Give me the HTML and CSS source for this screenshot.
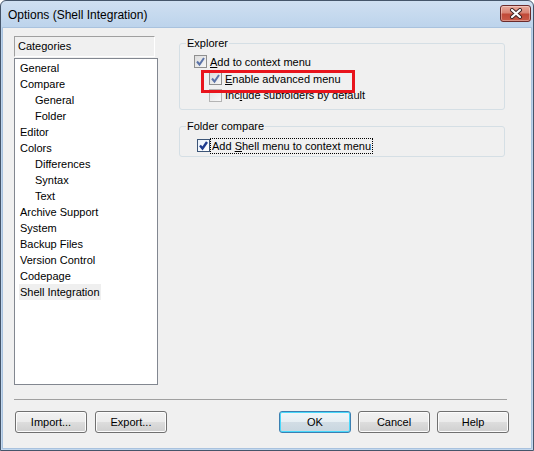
FILE: index.html
```html
<!DOCTYPE html>
<html>
<head>
<meta charset="utf-8">
<link rel="stylesheet" href="styles.css">
</head>
<body>
<div class="window">
  <div class="titlebar">
    <span class="title">Options (Shell Integration)</span>
    <div class="close">
      <svg width="14" height="11" viewBox="0 0 14 11">
        <path d="M3 2 L11 9 M11 2 L3 9" stroke="#3b2222" stroke-width="4" stroke-linecap="round" fill="none"/>
        <path d="M3 2 L11 9 M11 2 L3 9" stroke="#ffffff" stroke-width="2.2" stroke-linecap="round" fill="none"/>
      </svg>
    </div>
  </div>
  <div class="client">
    <div class="main">
      <div class="categories">
        <div class="cat-header">Categories</div>
        <div class="cat-list">
          <div class="item"><span>General</span></div>
          <div class="item"><span>Compare</span></div>
          <div class="item sub"><span>General</span></div>
          <div class="item sub"><span>Folder</span></div>
          <div class="item"><span>Editor</span></div>
          <div class="item"><span>Colors</span></div>
          <div class="item sub"><span>Differences</span></div>
          <div class="item sub"><span>Syntax</span></div>
          <div class="item sub"><span>Text</span></div>
          <div class="item"><span>Archive Support</span></div>
          <div class="item"><span>System</span></div>
          <div class="item"><span>Backup Files</span></div>
          <div class="item"><span>Version Control</span></div>
          <div class="item"><span>Codepage</span></div>
          <div class="item selected"><span>Shell Integration</span></div>
        </div>
      </div>
      <div class="pages">
        <fieldset class="group explorer">
          <legend>Explorer</legend>
          <div class="row r1">
            <span class="cb soft"><svg width="11" height="11" viewBox="0 0 11 11"><path d="M2 5.5 L4.5 8.5 L9 2" stroke="#5b73a8" stroke-width="2" fill="none"/></svg></span>
            <span class="lbl"><u>A</u>dd to context menu</span>
          </div>
          <div class="row indent r2">
            <span class="cb soft"><svg width="11" height="11" viewBox="0 0 11 11"><path d="M2 5.5 L4.5 8.5 L9 2" stroke="#5b73a8" stroke-width="2" fill="none"/></svg></span>
            <span class="lbl"><u>E</u>nable advanced menu</span>
          </div>
          <div class="row indent r3">
            <span class="cb empty"></span>
            <span class="lbl">Inc<u>l</u>ude subfolders by default</span>
          </div>
        </fieldset>
        <fieldset class="group folder">
          <legend>Folder compare</legend>
          <div class="row focus-row">
            <span class="cb active"><svg width="11" height="11" viewBox="0 0 11 11"><path d="M2 5.5 L4.5 8.5 L9 2" stroke="#1f3c8f" stroke-width="2.4" fill="none"/></svg></span>
            <span class="lbl focus">Add <u>S</u>hell menu to context menu</span>
          </div>
        </fieldset>
      </div>
    </div>
    <div class="separator"></div>
    <div class="buttons">
      <button class="btn">Import...</button>
      <button class="btn export">Export...</button>
      <div class="spacer"></div>
      <button class="btn default">OK</button>
      <button class="btn">Cancel</button>
      <button class="btn">Help</button>
    </div>
  </div>
  <div class="highlight"></div>
</div>
</body>
</html>
```

FILE: styles.css
```css
html, body {
  margin: 0;
  padding: 0;
  background: #ffffff;
}

.window {
  position: relative;
  width: 534px;
  height: 451px;
  box-sizing: border-box;
  border: 1px solid #45556a;
  border-radius: 6px 6px 0 0;
  background: linear-gradient(to bottom, #cfdff1 0px, #bad2eb 30px, #c3d8ee 100%);
  padding: 0 2px 2px 2px;
  display: flex;
  flex-direction: column;
  font-family: "Liberation Sans", Arial, sans-serif;
  font-size: 11px;
  color: #000;
}

.titlebar {
  height: 27px;
  display: flex;
  align-items: flex-start;
  justify-content: space-between;
  flex-shrink: 0;
}

.title {
  font-size: 12px;
  margin: 7px 0 0 5px;
  color: #000;
}

.close {
  width: 31px;
  height: 17px;
  box-sizing: border-box;
  margin: 4px 0 0 0;
  border: 1px solid #6b2b2b;
  border-radius: 3px;
  background: linear-gradient(to bottom, #e9a99b 0%, #d88474 45%, #c04a38 55%, #c95b48 100%);
  box-shadow: inset 0 0 0 1px rgba(255,255,255,0.35);
  display: flex;
  align-items: center;
  justify-content: center;
}

.client {
  flex: 1;
  background: #f0f0f0;
  padding: 8px 24px 0 11px;
  display: flex;
  flex-direction: column;
  box-shadow: 0 0 0 1px #a9c2de;
}

.main {
  height: 349px;
  display: flex;
}

.categories {
  width: 144px;
  display: flex;
  flex-direction: column;
}

.cat-header {
  width: 141px;
  height: 21px;
  box-sizing: border-box;
  border: 1px solid #a0a0a0;
  border-right-color: #ffffff;
  border-bottom-color: #ffffff;
  padding-left: 3px;
  line-height: 19px;
}

.cat-list {
  margin-top: 1px;
  height: 328px;
  box-sizing: border-box;
  border: 1px solid #828790;
  background: #ffffff;
  padding: 1px 0 0 4px;
}

.item {
  height: 16px;
  line-height: 16px;
}

.item span {
  padding: 0 1px;
  display: inline-block;
}

.item.sub {
  padding-left: 15px;
}

.item.selected span {
  background: #efefef;
}

.pages {
  margin-left: 21px;
  width: 326px;
  display: flex;
  flex-direction: column;
}

.group {
  margin: 0;
  padding: 0 0 4px 0;
  border: 1px solid #d5dfe5;
  border-radius: 3px;
  min-width: 0;
}

.group legend {
  margin-left: 6px;
  padding: 0 1px;
  line-height: 14px;
}

.explorer {
  padding-top: 3px;
  padding-bottom: 6px;
}

.folder {
  margin-top: 9px;
  padding-top: 4px;
  padding-bottom: 2px;
}

.row {
  height: 17px;
  display: flex;
  align-items: center;
  padding-left: 14px;
}

.row.r3 {
  height: 16px;
}

.row.indent {
  padding-left: 29px;
}

.row.focus-row {
  padding-left: 17px;
}

.cb {
  width: 13px;
  height: 13px;
  box-sizing: border-box;
  border: 1px solid #9a9a9a;
  display: flex;
  align-items: center;
  justify-content: center;
  flex-shrink: 0;
}

.cb.soft {
  background: linear-gradient(to bottom right, #dcdcdc, #f6f6f6);
  border-color: #8f8f8f;
}

.cb.empty {
  background: linear-gradient(to bottom right, #e4e4e4, #f8f8f8);
  border-color: #b4b4b4;
}

.cb.active {
  background: linear-gradient(to bottom right, #eaf2fb, #ffffff);
  border-color: #3c5577;
}

.lbl {
  margin-left: 3px;
  white-space: nowrap;
}

.lbl.focus {
  margin-left: 0;
  border: 1px dotted #000;
  padding: 0 1px;
  line-height: 14px;
}

.separator {
  margin-top: 14px;
  border-top: 1px solid #a0a0a0;
}

.buttons {
  margin-top: 11px;
  margin-left: 1px;
  margin-right: -2px;
  display: flex;
  gap: 7px;
}

.spacer {
  flex: 1;
}

.btn {
  width: 72px;
  height: 22px;
  box-sizing: border-box;
  border: 1px solid #707070;
  border-radius: 3px;
  background: linear-gradient(to bottom, #f2f2f2 0%, #ebebeb 50%, #dddddd 51%, #cfcfcf 100%);
  box-shadow: inset 0 0 0 1px #fcfcfc;
  font-family: "Liberation Sans", Arial, sans-serif;
  font-size: 11px;
  color: #000;
  padding: 0;
}

.btn.export {
  margin-left: 1px;
}

.btn.default {
  border-color: #3c7fb1;
  box-shadow: inset 0 0 0 1px #48d8fb;
  background: linear-gradient(to bottom, #f0f6f9 0%, #e6eef3 50%, #d2dde5 51%, #c8d6df 100%);
}

.highlight {
  position: absolute;
  left: 200px;
  top: 69px;
  width: 154px;
  height: 23px;
  box-sizing: border-box;
  border: 3px solid #e8141c;
}
```
